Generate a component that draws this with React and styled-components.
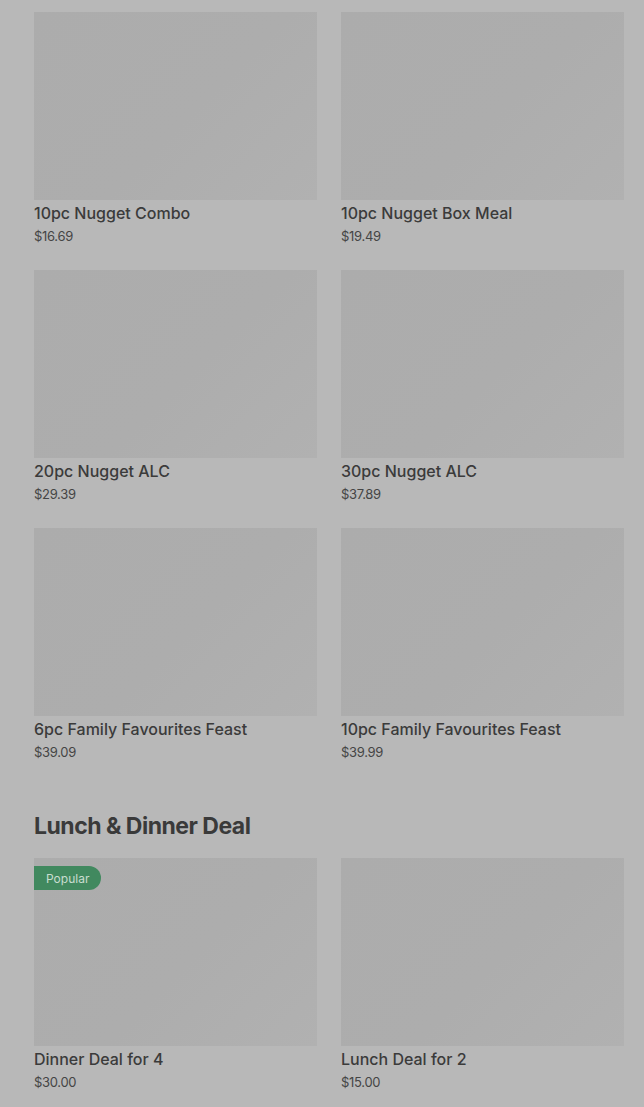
import React from 'react';
import styled, { createGlobalStyle } from 'styled-components';

const sections = [
  {
    title: null,
    items: [
      { name: '10pc Nugget Combo', price: '$16.69' },
      { name: '10pc Nugget Box Meal', price: '$19.49' },
      { name: '20pc Nugget ALC', price: '$29.39' },
      { name: '30pc Nugget ALC', price: '$37.89' },
      { name: '6pc Family Favourites Feast', price: '$39.09' },
      { name: '10pc Family Favourites Feast', price: '$39.99' },
    ],
  },
  {
    title: 'Lunch & Dinner Deal',
    items: [
      { name: 'Dinner Deal for 4', price: '$30.00', badge: 'Popular' },
      { name: 'Lunch Deal for 2', price: '$15.00' },
    ],
  },
];

const Global = createGlobalStyle`
  html, body {
    margin: 0;
    padding: 0;
    background: #b8b8b8;
  }
  body {
    font-family: Inter, "Noto Sans", sans-serif;
    color: #3a3a3a;
  }
`;

const Page = styled.main`
  padding: 12px 20px 0 34px;
  height: 1107px;
  overflow: hidden;
  box-sizing: border-box;
`;

const Section = styled.section`
  & + & {
    margin-top: 46px;
  }
`;

const Heading = styled.h2`
  margin: 0 0 16px;
  font-size: 23px;
  line-height: 32px;
  font-weight: 700;
  letter-spacing: -0.5px;
  color: #3a3a3a;
`;

const Grid = styled.div`
  display: grid;
  grid-template-columns: 1fr 1fr;
  column-gap: 24px;
  row-gap: 22px;
`;

const Card = styled.article`
  display: flex;
  flex-direction: column;
`;

const Thumb = styled.div`
  position: relative;
  height: 188px;
  background: linear-gradient(135deg, #acacac 0%, #adadad 55%, #b1b1b1 100%);
`;

const Badge = styled.span`
  position: absolute;
  top: 8px;
  left: 0;
  height: 24px;
  padding: 0 12px;
  display: flex;
  align-items: center;
  background: #41895f;
  color: #c9ddd0;
  font-size: 12px;
  border-radius: 0 12px 12px 0;
`;

const Name = styled.div`
  padding-top: 1px;
  font-size: 16px;
  line-height: 24px;
  font-weight: 500;
  color: #3b3b3b;
`;

const Price = styled.div`
  margin-top: -1px;
  font-size: 13px;
  line-height: 24px;
  color: #454545;
  letter-spacing: -0.3px;
`;

export default function App() {
  return (
    <>
      <Global />
      <Page>
        {sections.map((s, i) => (
          <Section key={i}>
            {s.title && <Heading>{s.title}</Heading>}
            <Grid>
              {s.items.map((it) => (
                <Card key={it.name}>
                  <Thumb>{it.badge && <Badge>{it.badge}</Badge>}</Thumb>
                  <Name>{it.name}</Name>
                  <Price>{it.price}</Price>
                </Card>
              ))}
            </Grid>
          </Section>
        ))}
      </Page>
    </>
  );
}
